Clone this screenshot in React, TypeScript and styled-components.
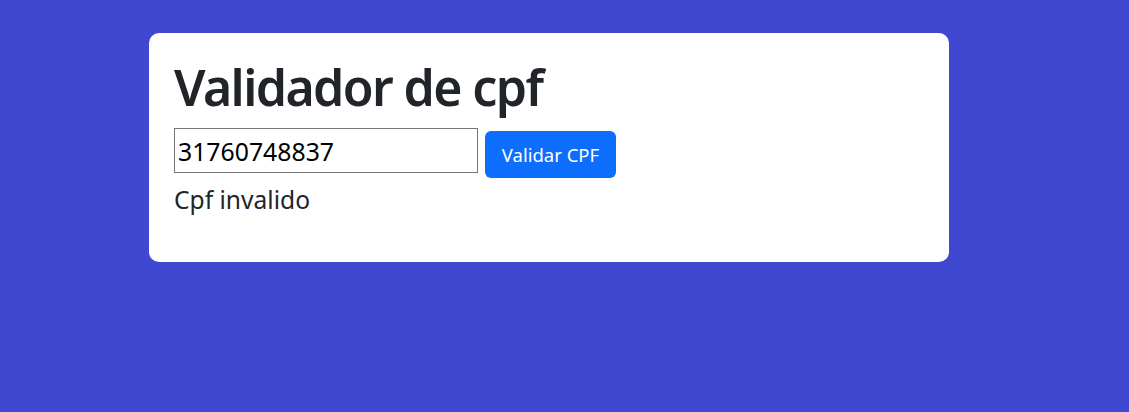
import React, { useState } from "react";
import styled, { createGlobalStyle } from "styled-components";

const Global = createGlobalStyle`
  html, body { margin: 0; padding: 0; }
  body {
    background: #4047d0;
    font-family: "Noto Sans", "Open Sans", sans-serif;
    color: #212529;
    min-height: 412px;
  }
`;

const Page = styled.div`
  padding: 33px 0 0 149px;
`;

const Card = styled.div`
  width: 800px;
  height: 229px;
  box-sizing: border-box;
  background: #fff;
  border-radius: 10px;
  padding: 24px 25px;
`;

const Title = styled.h1`
  margin: 0 0 11px;
  font-size: 50px;
  line-height: 60px;
  font-weight: 600;
  letter-spacing: -1.6px;
`;

const Row = styled.div`
  display: flex;
  align-items: flex-start;
  gap: 7px;
`;

const Input = styled.input`
  width: 304px;
  height: 45px;
  box-sizing: border-box;
  border: 1px solid #767676;
  padding: 0 3px;
  font-family: "Noto Sans", sans-serif;
  font-size: 24.8px;
  color: #000;
  outline: none;
`;

const Button = styled.button`
  margin-top: 3px;
  width: 131px;
  height: 47px;
  border: none;
  border-radius: 6px;
  background: #0d6efd;
  color: #fff;
  font-family: "Noto Sans", sans-serif;
  font-size: 18.5px;
  cursor: pointer;
`;

const Message = styled.p`
  margin: 6px 0 0 0;
  font-size: 24.6px;
  line-height: 32px;
`;

export default function App() {
  const [value, setValue] = useState("31760748837");
  return (
    <>
      <Global />
      <Page>
        <Card>
          <Title>Validador de cpf</Title>
          <Row>
            <Input value={value} onChange={(e) => setValue(e.target.value)} />
            <Button>Validar CPF</Button>
          </Row>
          <Message>Cpf invalido</Message>
        </Card>
      </Page>
    </>
  );
}
